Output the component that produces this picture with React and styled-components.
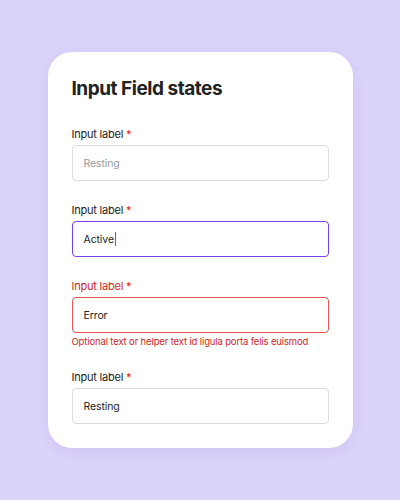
import React from 'react';
import styled, { createGlobalStyle } from 'styled-components';

const GlobalStyle = createGlobalStyle`
  * { box-sizing: border-box; }
  body {
    margin: 0;
    font-family: Inter, 'Noto Sans', sans-serif;
    background: #dcd3fb;
  }
`;

const Page = styled.div`
  min-height: 100vh;
  display: flex;
  align-items: center;
  justify-content: center;
`;

const Card = styled.div`
  width: 305px;
  display: flex;
  flex-direction: column;
  gap: 20px;
  padding: 24px;
  background: #ffffff;
  border-radius: 24px;
  box-shadow: 0px 4px 14px 0px rgba(60, 40, 140, 0.08);
`;

const Title = styled.h2`
  margin: 0 0 4px 0;
  font-size: 19px;
  line-height: 25px;
  font-weight: 700;
  color: #222222;
  letter-spacing: -0.025em;
`;

const Field = styled.div`
  display: flex;
  flex-direction: column;
`;

const Label = styled.label`
  font-size: 11px;
  line-height: 18px;
  font-weight: 400;
  letter-spacing: -0.02em;
  color: ${(p) => (p.$error ? '#d11f1f' : '#222222')};
  margin-bottom: 2px;
`;

const Star = styled.span`
  color: #d11f1f;
`;

const borders = {
  resting: '#dcdcdc',
  active: '#7a3fe6',
  error: '#e05454',
};

const Box = styled.div`
  height: 36px;
  display: flex;
  align-items: center;
  padding: 0 11px;
  border: 1px solid ${(p) => borders[p.$state]};
  border-radius: 4px;
  font-size: 10.5px;
  letter-spacing: -0.01em;
  color: ${(p) => (p.$placeholder ? '#9a9a9a' : '#222222')};
`;

const Caret = styled.span`
  display: inline-block;
  width: 1px;
  height: 14px;
  margin-left: 1px;
  background: #7a3fe6;
`;

const Helper = styled.div`
  margin-top: 2px;
  font-size: 9.5px;
  line-height: 13px;
  letter-spacing: -0.015em;
  white-space: nowrap;
  color: #d11f1f;
`;

const InputField = ({ state = 'resting', value, placeholder, helper, caret }) => (
  <Field>
    <Label $error={state === 'error'}>
      Input label <Star>*</Star>
    </Label>
    <Box $state={state} $placeholder={!!placeholder}>
      {value || placeholder}
      {caret && <Caret />}
    </Box>
    {helper && <Helper>{helper}</Helper>}
  </Field>
);

const App = () => (
  <>
    <GlobalStyle />
    <Page>
      <Card>
        <Title>Input Field states</Title>
        <InputField placeholder="Resting" />
        <InputField state="active" value="Active" caret />
        <InputField
          state="error"
          value="Error"
          helper="Optional text or helper text id ligula porta felis euismod"
        />
        <InputField value="Resting" />
      </Card>
    </Page>
  </>
);

export default App;
